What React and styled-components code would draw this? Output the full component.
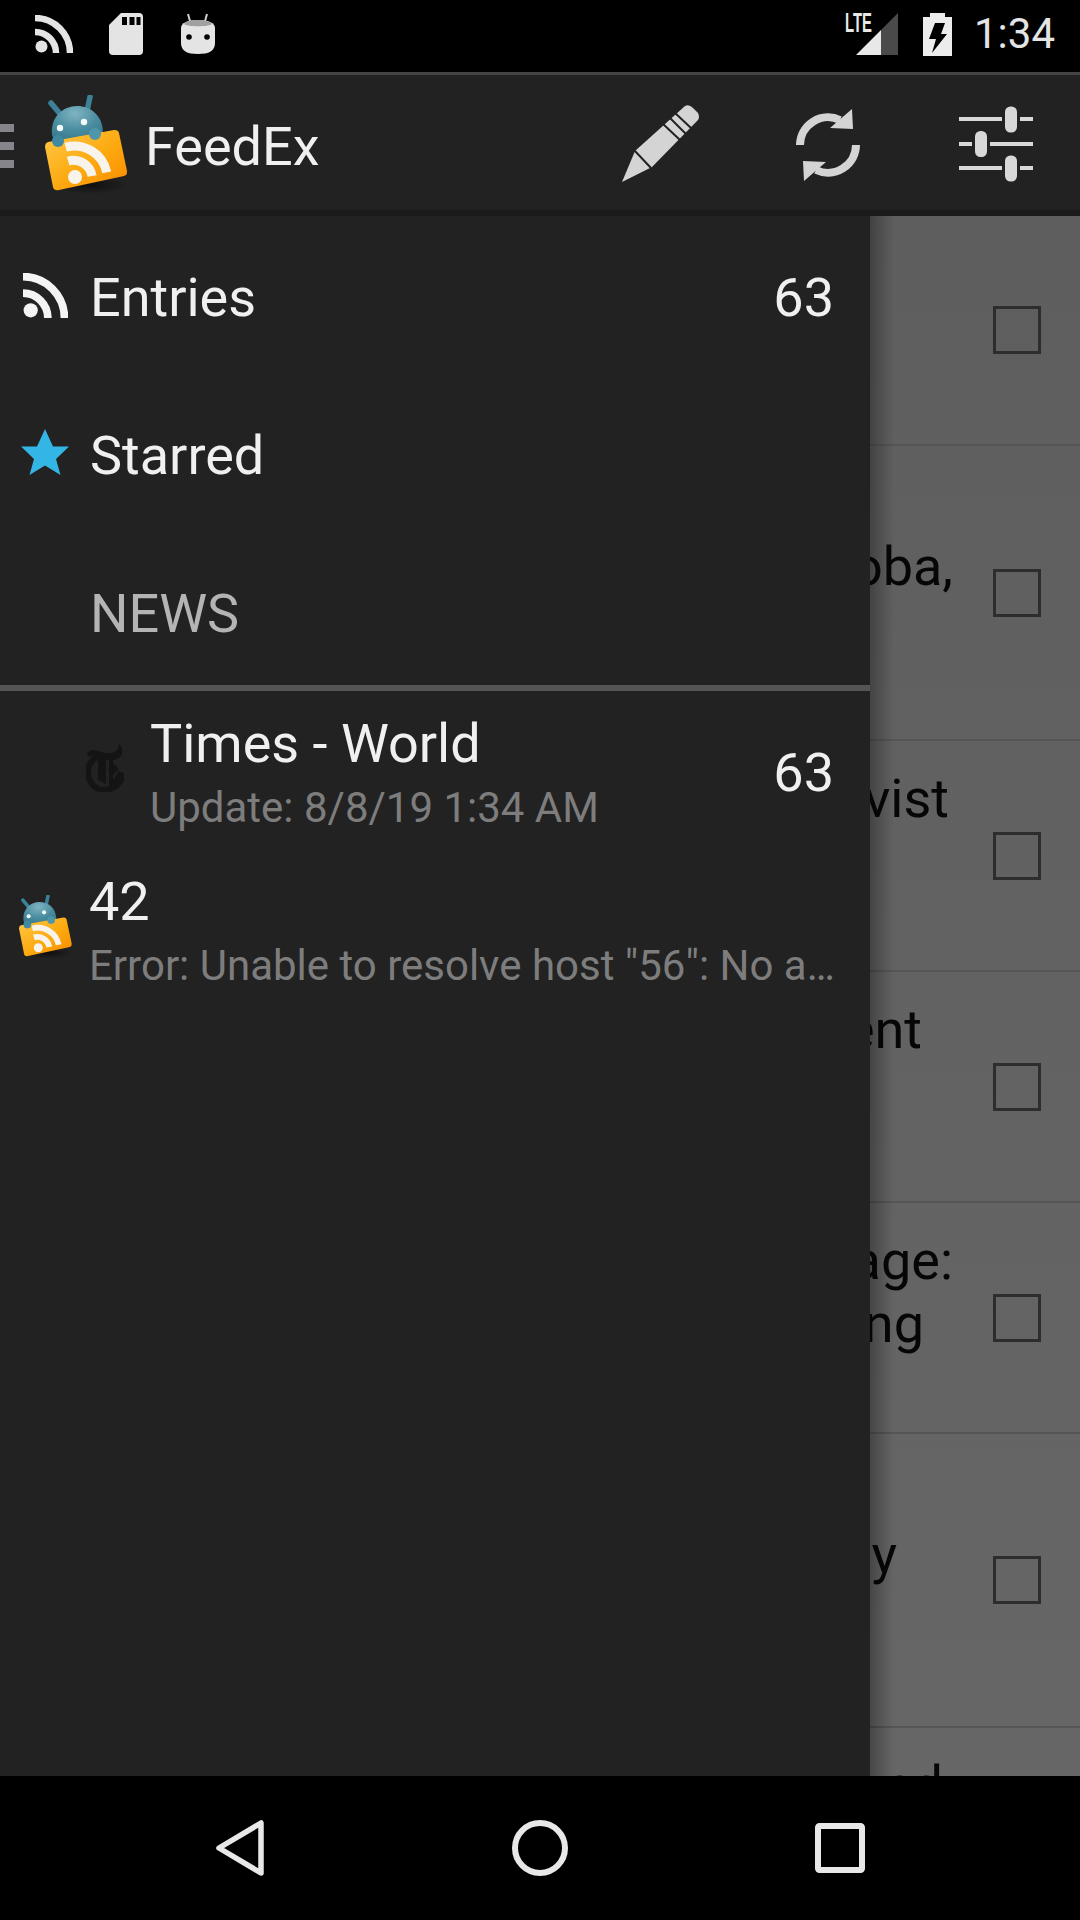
import React from "react";
import styled, { createGlobalStyle } from "styled-components";

const GlobalStyle = createGlobalStyle`
  html, body {
    margin: 0;
    padding: 0;
    background: #000;
  }
  * {
    box-sizing: border-box;
  }
`;

const RssIcon = ({ size, color }) => (
  <svg width={size} height={size} viewBox="0 0 38 38" fill="none">
    <circle cx="6.5" cy="31.5" r="6" fill={color} />
    <path d="M0 3A35 35 0 0 1 35 38" stroke={color} strokeWidth="6.5" />
    <path d="M0 17A21 21 0 0 1 21 38" stroke={color} strokeWidth="6.5" />
  </svg>
);

const SdIcon = () => (
  <svg width="34" height="42" viewBox="0 0 34 42">
    <path
      d="M12 0H30a4 4 0 0 1 4 4V38a4 4 0 0 1-4 4H4a4 4 0 0 1-4-4V12Z"
      fill="#e4e4e4"
    />
    <path d="M13 4h5v8h-5ZM20.500 4h5v8h-5ZM27.500 4h4v8h-4Z" fill="#000" />
  </svg>
);

const BotIcon = () => (
  <svg width="38" height="42" viewBox="0 0 38 42">
    <path d="M9 1l2.500 9M28 1l-2.500 9" stroke="#cfcfcf" strokeWidth="2" />
    <path
      d="M2 15C2 10 8 7 19 7s17 3 17 8V30C36 38 30 41 19 41S2 38 2 30Z"
      fill="#e4e4e4"
    />
    <path d="M5 11C7 8 12 7 19 7s12 1 14 4C30 14 8 14 5 11Z" fill="#a0a0a0" />
    <circle cx="10" cy="24" r="2.800" fill="#000" />
    <circle cx="28" cy="24" r="2.800" fill="#000" />
  </svg>
);

const SignalIcon = () => (
  <svg width="55" height="44" viewBox="0 0 55 44" overflow="visible">
    <path d="M11 43L36 18V43Z" fill="#e8e8e8" />
    <path d="M36 18L53 1V43H36Z" fill="#4a4a4a" />
    <text
      x="0"
      y="20"
      fontFamily="'Liberation Sans', sans-serif"
      fontSize="27"
      fontWeight="700"
      fill="#e8e8e8"
      textLength="27"
      lengthAdjust="spacingAndGlyphs"
    >
      LTE
    </text>
  </svg>
);

const BatteryIcon = () => (
  <svg width="29" height="43" viewBox="0 0 29 43">
    <path d="M7 0H22V4H29V43H0V4H7Z" fill="#ececec" />
    <path d="M12 10H22L18 21H24L9 40L13 26H6Z" fill="#000" />
  </svg>
);

const LogoIcon = ({ width }) => (
  <svg width={width} viewBox="0 0 84 104">
    <defs>
      <linearGradient id="logoFolder" x1="0" y1="0" x2="1" y2="1">
        <stop offset="0" stopColor="#ffc94a" />
        <stop offset="0.55" stopColor="#fca90f" />
        <stop offset="1" stopColor="#fb8a00" />
      </linearGradient>
      <radialGradient id="logoHead" cx="0.45" cy="0.2" r="0.9">
        <stop offset="0" stopColor="#7fb4c2" />
        <stop offset="0.5" stopColor="#4a8da0" />
        <stop offset="1" stopColor="#2f6e85" />
      </radialGradient>
      <radialGradient id="logoShade" cx="0.5" cy="0.5" r="0.5">
        <stop offset="0" stopColor="#000" stopOpacity="0.55" />
        <stop offset="1" stopColor="#000" stopOpacity="0" />
      </radialGradient>
    </defs>
    <ellipse cx="46" cy="90" rx="38" ry="9" fill="url(#logoShade)" />
    <path
      d="M6 8L16 20M45 2L42 16"
      stroke="#3d8199"
      strokeWidth="5.500"
      strokeLinecap="round"
    />
    <path d="M7 40C5 22 18 11 32 11s26 10 26 27L58 48H10Z" fill="url(#logoHead)" />
    <circle cx="15" cy="33" r="3.200" fill="#f4fbfc" />
    <circle cx="39" cy="27" r="3.200" fill="#f4fbfc" />
    <path
      d="M3 47L69 35Q73 34.500 74 38L82 76Q82.500 80 79 81L14 95Q9 96 8 92L0 52Q0 48 3 47Z"
      fill="url(#logoFolder)"
    />
    <circle cx="13" cy="46" r="6" fill="#3f8aa0" />
    <circle cx="50" cy="39" r="6" fill="#4e97aa" />
    <g transform="rotate(-10 30 82)" fill="none" stroke="#f8f4ec" strokeWidth="9">
      <path d="M26 51A33 33 0 0 1 62 83" />
      <path d="M26 65A19 19 0 0 1 47 84" />
    </g>
    <circle cx="30" cy="82" r="7" fill="#f8f4ec" />
  </svg>
);

const PencilIcon = () => (
  <svg width="80" height="80" viewBox="-3 0 80 80">
    <path
      d="M0 78L13 47L63 2Q67 0 71 4L76 9Q78 13 76 16L30 63Z"
      fill="#d4d4d4"
      strokeLinejoin="round"
    />
    <path
      d="M12 46L29 64M40 19L58 36M47 13L64 30M52 8L69 24"
      stroke="#222"
      strokeWidth="2"
    />
  </svg>
);

const SyncIcon = () => (
  <svg width="70" height="80" viewBox="-1 0 70 80" fill="none">
    <path d="M5 41A28 28 0 0 1 45 16" stroke="#d4d4d4" strokeWidth="8" />
    <path d="M57 5L58 25L35 24Z" fill="#d4d4d4" />
    <path d="M61 41A28 28 0 0 1 21 66" stroke="#d4d4d4" strokeWidth="8" />
    <path d="M9 77L8 57L31 58Z" fill="#d4d4d4" />
  </svg>
);

const SlidersIcon = () => (
  <svg width="74" height="76" viewBox="0 0 74 76">
    <path
      d="M0 13H74M0 38H74M0 62H74"
      stroke="#d8d8d8"
      strokeWidth="4"
    />
    <rect x="44.500" y="-1" width="15" height="29" rx="7" fill="#d8d8d8" stroke="#222" strokeWidth="3" />
    <rect x="14.500" y="23.500" width="15" height="29" rx="7" fill="#d8d8d8" stroke="#222" strokeWidth="3" />
    <rect x="44.500" y="48" width="15" height="29" rx="7" fill="#d8d8d8" stroke="#222" strokeWidth="3" />
  </svg>
);

const StarIcon = () => (
  <svg width="48" height="48" viewBox="0 0 48 48">
    <path
      d="M24 0L32 17.500H48L35 30L39.500 46L24 36.500L8.500 46L13 30L0 17.500H16Z"
      fill="#33b5e5"
    />
  </svg>
);

const TimesIcon = () => (
  <svg width="38" height="48" viewBox="0 0 38 48" fill="none">
    <path
      d="M11 13C4 17 2 23 2 28C2 38 9 46 18 46C26 46 33 41 37 32L34 31C31 37 27 39 23 39"
      stroke="#141414"
      strokeWidth="6"
    />
    <path
      d="M1 10C5 2 12 8 20 9C28 10 33 6 33 0C38 4 38 14 28 16C18 17 11 11 6 12C4 12.500 2 13 1 10Z"
      fill="#141414"
    />
    <path d="M12 11H20V40L12 36Z" fill="#141414" />
    <path d="M25 14V38" stroke="#141414" strokeWidth="4" />
    <path d="M27 19L33 25L27 31L22 25Z" fill="#141414" />
  </svg>
);

const BackIcon = () => (
  <svg width="60" height="64" viewBox="0 0 60 64" fill="none">
    <path
      d="M51 7V57L9 32Z"
      stroke="#e8e8e8"
      strokeWidth="5.500"
      strokeLinejoin="round"
    />
  </svg>
);

const HomeIcon = () => (
  <svg width="60" height="60" viewBox="0 0 60 60" fill="none">
    <circle cx="30" cy="30" r="25" stroke="#e8e8e8" strokeWidth="6" />
  </svg>
);

const RecentIcon = () => (
  <svg width="60" height="60" viewBox="0 0 60 60" fill="none">
    <rect x="8" y="8" width="44" height="44" rx="1.500" stroke="#e8e8e8" strokeWidth="6" />
  </svg>
);

// the list runs on under the drawer, so only the line ends show
const articles = [
  { height: 230, lines: [] },
  { height: 295, lines: [{ text: "", end: 953 }, { text: "oba,", end: 953 }] },
  { height: 231, lines: [{ text: "vist", end: 949 }] },
  { height: 231, lines: [{ text: "ent", end: 922 }] },
  { height: 231, lines: [{ text: "age:", end: 953 }, { text: "ng", end: 924 }] },
  { height: 294, lines: [{ text: "", end: 897 }, { text: "y", end: 897 }] },
  { height: 200, lines: [{ text: "nd", end: 943 }] },
];

export default function App() {
  return (
    <Screen>
      <GlobalStyle />
      <StatusBar>
        <StatusIcons>
          <RssIcon size={38} color="#e4e4e4" />
          <SdIcon />
          <BotIcon />
        </StatusIcons>
        <SystemIcons>
          <SignalIcon />
          <BatteryIcon />
          <Clock>1:34</Clock>
        </SystemIcons>
      </StatusBar>
      <ActionBar>
        <Hamburger>
          <span />
          <span />
          <span />
        </Hamburger>
        <LogoSlot>
          <LogoIcon width={84} />
        </LogoSlot>
        <AppTitle>FeedEx</AppTitle>
        <Actions>
          <ActionSlot $width={80}>
            <PencilIcon />
          </ActionSlot>
          <ActionSlot $width={70}>
            <SyncIcon />
          </ActionSlot>
          <ActionSlot $width={74}>
            <SlidersIcon />
          </ActionSlot>
        </Actions>
      </ActionBar>
      <Main>
        <ArticleList>
          {articles.map((article, i) => (
            <ArticleRow key={i} $height={article.height}>
              <Headline>
                {article.lines.map((line, j) => (
                  <HeadlineLine key={j} $end={line.end}>
                    {line.text}
                  </HeadlineLine>
                ))}
              </Headline>
              {i < 6 && <CheckBox />}
            </ArticleRow>
          ))}
        </ArticleList>
        <Drawer>
          <MenuRow>
            <IconSlot>
              <RssIcon size={45} color="#f4f4f4" />
            </IconSlot>
            <RowLabel>Entries</RowLabel>
            <Count>63</Count>
          </MenuRow>
          <MenuRow>
            <IconSlot>
              <StarIcon />
            </IconSlot>
            <RowLabel>Starred</RowLabel>
          </MenuRow>
          <GroupRow>NEWS</GroupRow>
          <Divider />
          <FeedRow>
            <FeedIcon>
              <TimesIcon />
            </FeedIcon>
            <FeedText>
              <MenuLabel>Times - World</MenuLabel>
              <FeedStatus>Update: 8/8/19 1:34 AM</FeedStatus>
            </FeedText>
            <Count>63</Count>
          </FeedRow>
          <ErrorRow>
            <SmallLogo>
              <LogoIcon width={54} />
            </SmallLogo>
            <FeedText>
              <MenuLabel>42</MenuLabel>
              <FeedStatus>
                Error: Unable to resolve host "56": No address associated with hostname
              </FeedStatus>
            </FeedText>
          </ErrorRow>
        </Drawer>
      </Main>
      <NavBar>
        <NavSlot>
          <BackIcon />
        </NavSlot>
        <NavSlot>
          <HomeIcon />
        </NavSlot>
        <NavSlot>
          <RecentIcon />
        </NavSlot>
      </NavBar>
    </Screen>
  );
}

const Screen = styled.div`
  width: 1080px;
  height: 1920px;
  display: flex;
  flex-direction: column;
  overflow: hidden;
  background: #000;
  font-family: Roboto, "Noto Sans", sans-serif;
`;

const StatusBar = styled.header`
  height: 75px;
  flex: none;
  display: flex;
  align-items: center;
  justify-content: space-between;
  padding: 0 25px 3px 35px;
  background: #000;
  border-bottom: 3px solid #444;
`;

const StatusIcons = styled.div`
  display: flex;
  align-items: center;
  gap: 36px;
  margin-top: -1px;
  svg {
    display: block;
  }
`;

const SystemIcons = styled.div`
  display: flex;
  align-items: center;
  margin-top: -1px;
  svg {
    display: block;
  }
  svg:first-child {
    margin-right: 23px;
  }
`;

const Clock = styled.span`
  margin-left: 22px;
  font-size: 42px;
  line-height: 44px;
  color: #e4e4e4;
`;

const ActionBar = styled.div`
  height: 141px;
  flex: none;
  display: flex;
  align-items: center;
  padding-top: 3px;
  background: #222;
  border-bottom: 6px solid #1a1a1a;
`;

const Hamburger = styled.div`
  width: 14px;
  display: flex;
  flex-direction: column;
  gap: 10px;
  margin-top: 3px;
  span {
    display: block;
    height: 8px;
    background: #85858b;
  }
`;

const LogoSlot = styled.div`
  width: 84px;
  margin: 0 0 0 31px;
  padding-top: 6px;
  svg {
    display: block;
  }
`;

const AppTitle = styled.div`
  margin-left: 16px;
  padding-top: 5px;
  font-size: 54px;
  color: #f0f0f0;
`;

const Actions = styled.div`
  margin-left: auto;
  display: flex;
  align-items: center;
  gap: 95px;
  padding-right: 47px;
`;

const ActionSlot = styled.div`
  width: ${(p) => p.$width}px;
  svg {
    display: block;
  }
`;

const Main = styled.main`
  position: relative;
  flex: 1;
  overflow: hidden;
`;

const ArticleList = styled.div`
  min-height: 100%;
  background: linear-gradient(#5e5e5e, #676767);
`;

const ArticleRow = styled.div`
  height: ${(p) => p.$height}px;
  display: grid;
  grid-template-columns: minmax(0, 1fr) 48px;
  align-items: center;
  padding-right: 39px;
  border-bottom: 2px solid #555;
`;

const Headline = styled.div`
  align-self: start;
  padding-top: 26px;
  font-size: 54px;
  line-height: 63px;
  color: #060606;
`;

const HeadlineLine = styled.div`
  min-height: 63px;
  text-align: right;
  margin-right: ${(p) => 993 - p.$end}px;
`;

const CheckBox = styled.div`
  width: 48px;
  height: 48px;
  border: 3px solid #2d2d2d;
`;

const Drawer = styled.nav`
  position: absolute;
  top: 0;
  bottom: 0;
  left: 0;
  width: 870px;
  background: #222;
  &::after {
    content: "";
    position: absolute;
    top: 0;
    bottom: 0;
    left: 100%;
    width: 24px;
    background: linear-gradient(to right, rgba(0, 0, 0, 0.3), rgba(0, 0, 0, 0));
  }
`;

const MenuRow = styled.div`
  height: 158px;
  display: flex;
  align-items: center;
  padding: 0 37px 0 21px;
`;

const IconSlot = styled.div`
  width: 48px;
  margin-right: 21px;
  display: flex;
  justify-content: center;
  svg {
    display: block;
  }
`;

const MenuLabel = styled.div`
  font-size: 54px;
  line-height: 64px;
  color: #f0f0f0;
  white-space: nowrap;
`;

const RowLabel = styled(MenuLabel)`
  margin-top: 5px;
`;

const Count = styled.div`
  margin: 5px -1px 0 auto;
  font-size: 54px;
  line-height: 64px;
  color: #f0f0f0;
`;

const GroupRow = styled.div`
  height: 153px;
  display: flex;
  align-items: center;
  padding: 10px 0 0 90px;
  font-size: 54px;
  color: #b4b4b4;
`;

const Divider = styled.div`
  height: 6px;
  background: #555;
`;

const FeedRow = styled.div`
  height: 158px;
  display: flex;
  align-items: center;
  padding: 0 37px 0 86px;
`;

const FeedIcon = styled.div`
  width: 38px;
  margin-right: 26px;
  padding-bottom: 4px;
  svg {
    display: block;
  }
`;

const FeedText = styled.div`
  flex: 1;
  min-width: 0;
  padding-top: 8px;
`;

const FeedStatus = styled.div`
  margin-top: 4px;
  font-size: 42px;
  line-height: 56px;
  color: #7d7d7d;
  white-space: nowrap;
  overflow: hidden;
  text-overflow: ellipsis;
`;

const ErrorRow = styled(FeedRow)`
  padding: 0 30px 0 19px;
`;

const SmallLogo = styled.div`
  width: 54px;
  margin-right: 16px;
  padding-top: 1px;
  svg {
    display: block;
  }
`;

const NavBar = styled.footer`
  height: 144px;
  flex: none;
  display: grid;
  grid-template-columns: repeat(3, 300px);
  padding: 0 90px;
  background: #000;
`;

const NavSlot = styled.div`
  display: flex;
  align-items: center;
  justify-content: center;
  svg {
    display: block;
  }
`;
